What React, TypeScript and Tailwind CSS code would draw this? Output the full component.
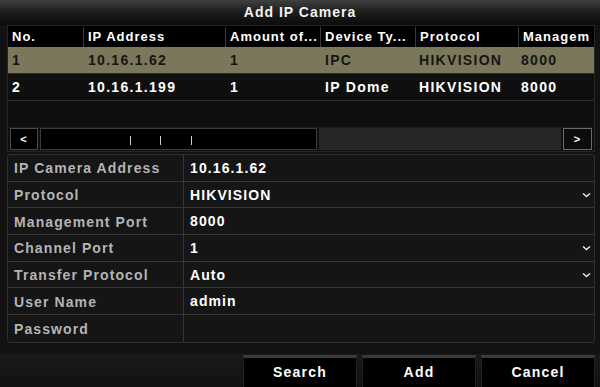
import React from "react";

const cols = "grid grid-cols-[75px_142px_95px_95px_103px_1fr]";

const devices = [
  { no: "1", ip: "10.16.1.62", amount: "1", type: "IPC", proto: "HIKVISION", port: "8000" },
  { no: "2", ip: "10.16.1.199", amount: "1", type: "IP Dome", proto: "HIKVISION", port: "8000" },
];

const fields = [
  { label: "IP Camera Address", value: "10.16.1.62" },
  { label: "Protocol", value: "HIKVISION", drop: true },
  { label: "Management Port", value: "8000" },
  { label: "Channel Port", value: "1", drop: true },
  { label: "Transfer Protocol", value: "Auto", drop: true },
  { label: "User Name", value: "admin" },
  { label: "Password", value: "" },
];

function Chevron() {
  return (
    <svg width="9" height="6" viewBox="0 0 9 6" className="mr-[3px]">
      <path d="M1 1.5 L4.5 4.5 L8 1.5" stroke="#e5e5e5" strokeWidth="1.6" fill="none" />
    </svg>
  );
}

export default function App() {
  return (
    <div className="w-[600px] h-[387px] overflow-hidden bg-[#121212] flex flex-col font-['Liberation_Sans',Arial,sans-serif] font-bold text-[13px] tracking-[1px]">
      {/* title bar */}
      <div className="h-[25px] shrink-0 flex items-center justify-center bg-gradient-to-b from-[#404040] via-[#1c1c1c] to-[#0c0c0c] text-[#f2f2f2] text-[14px]">
        Add IP Camera
      </div>

      <div className="pl-[7px] pr-[5px] flex flex-col">
        {/* device list */}
        <div className="border border-[#262626] bg-[#0f0f0f]">
          <div className={`${cols} h-[21px] pt-[1px] text-white bg-black`}>
            {["No.", "IP Address", "Amount of...", "Device Ty...", "Protocol", "Managem"].map((h, i) => (
              <div
                key={h}
                className={`flex items-center pl-[4px] whitespace-nowrap overflow-hidden ${i > 0 ? "border-l border-[#3a3a3a]" : ""}`}
              >
                {h}
              </div>
            ))}
          </div>
          {devices.map((d, i) => (
            <div
              key={d.no}
              className={`${cols} h-[27px] pt-[1px] text-[14px] tracking-[1.3px] border-b border-[#2a2a2a] ${i === 0 ? "bg-[#7a775b] text-[#151515]" : "text-white"}`}
            >
              <div className="flex items-center pl-[4px]">{d.no}</div>
              <div className="flex items-center pl-[5px]">{d.ip}</div>
              <div className="flex items-center pl-[5px]">{d.amount}</div>
              <div className="flex items-center pl-[5px]">{d.type}</div>
              <div className="flex items-center pl-[4px]">{d.proto}</div>
              <div className="flex items-center pl-[3px]">{d.port}</div>
            </div>
          ))}
          <div className="h-[26px]" />

          {/* horizontal scrollbar */}
          <div className="h-[24px] flex items-stretch gap-[2px] px-[2px] pb-[1px] border-t border-[#1c1c1c]">
            <div className="w-[28px] border border-[#4a4a4a] bg-black flex items-center justify-center text-white text-[11px]">
              &lt;
            </div>
            <div className="w-[277px] border border-[#3a3a3a] bg-black relative">
              <span className="absolute left-[89px] top-[7px] w-px h-[9px] bg-[#d0d0d0]" />
              <span className="absolute left-[119px] top-[7px] w-px h-[9px] bg-[#d0d0d0]" />
              <span className="absolute left-[150px] top-[7px] w-px h-[9px] bg-[#d0d0d0]" />
            </div>
            <div className="flex-1 bg-[#262626]" />
            <div className="w-[29px] border border-[#6a6a6a] bg-[#0c0c0c] flex items-center justify-center text-white text-[11px]">
              &gt;
            </div>
          </div>
        </div>

        {/* form */}
        <div className="mt-[2px] border border-[#2e2e2e] rounded-[3px] bg-[#151515] text-[14px] tracking-[1.1px]">
          {fields.map((f, i) => (
            <div
              key={f.label}
              className={`grid grid-cols-[176px_1fr] h-[26.7px] ${i < fields.length - 1 ? "border-b border-[#363636]" : ""}`}
            >
              <div className="flex items-center pl-[6px] pt-[2px] text-[#b4b4b4] border-r border-[#363636]">{f.label}</div>
              <div className="flex items-center justify-between pl-[6px] pt-[1px] text-white">
                <span>{f.value}</span>
                {f.drop && <Chevron />}
              </div>
            </div>
          ))}
        </div>
      </div>

      {/* buttons */}
      <div className="flex-1 mt-[11px] bg-gradient-to-b from-[#1a1a1a] to-[#111] flex justify-end gap-[5px] pr-[5px] pt-[1px]">
        {["Search", "Add", "Cancel"].map((b) => (
          <div
            key={b}
            className="w-[114px] flex items-center justify-center text-white text-[14px] tracking-[1.2px] bg-black border-t-[3px] border-[#3a3a3a] border-x border-x-[#222]"
          >
            {b}
          </div>
        ))}
      </div>
    </div>
  );
}
